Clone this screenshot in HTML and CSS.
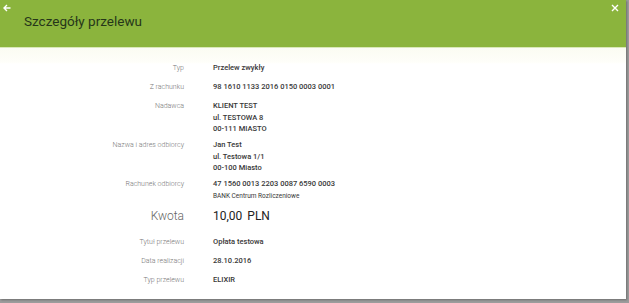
FILE: index.html
```html
<!DOCTYPE html>
<html lang="pl">
<head>
  <meta charset="UTF-8" />
  <title>Szczegóły przelewu</title>
  <link rel="stylesheet" href="styles.css">
</head>
<body>

  <div class="okno">
    <div class="naglowek">
      <!-- strzałka wstecz -->
      <button class="btn-wstecz" aria-label="Wstecz">
        <svg width="8" height="8" viewBox="0 0 8 8"><path d="M7.5 4H1.2M4 1L1 4l3 3" fill="none" stroke="#fff" stroke-width="1.4"/></svg>
      </button>
      <h1>Szczegóły przelewu</h1>
      <button class="btn-zamknij" aria-label="Zamknij">
        <svg width="8" height="8" viewBox="0 0 8 8"><path d="M1 1l6 6M7 1L1 7" fill="none" stroke="#fff" stroke-width="1.4"/></svg>
      </button>
    </div>

    <div class="tresc">
      <div class="wiersz">
        <div class="etykieta">Typ</div>
        <div class="wartosc">Przelew zwykły</div>
      </div>
      <div class="wiersz">
        <div class="etykieta">Z rachunku</div>
        <div class="wartosc">98 1610 1133 2016 0150 0003 0001</div>
      </div>
      <div class="wiersz">
        <div class="etykieta">Nadawca</div>
        <div class="wartosc">KLIENT TEST<br>ul. TESTOWA 8<br>00-111 MIASTO</div>
      </div>
      <div class="wiersz">
        <div class="etykieta">Nazwa i adres odbiorcy</div>
        <div class="wartosc">Jan Test<br>ul. Testowa 1/1<br>00-100 Miasto</div>
      </div>
      <div class="wiersz">
        <div class="etykieta">Rachunek odbiorcy</div>
        <div class="wartosc">47 1560 0013 2203 0087 6590 0003<br><span class="bank">BANK Centrum Rozliczeniowe</span></div>
      </div>
      <div class="wiersz kwota">
        <div class="etykieta">Kwota</div>
        <div class="wartosc">10,00 PLN</div>
      </div>
      <div class="wiersz">
        <div class="etykieta">Tytuł przelewu</div>
        <div class="wartosc">Opłata testowa</div>
      </div>
      <div class="wiersz">
        <div class="etykieta">Data realizacji</div>
        <div class="wartosc">28.10.2016</div>
      </div>
      <div class="wiersz">
        <div class="etykieta">Typ przelewu</div>
        <div class="wartosc">ELIXIR</div>
      </div>
    </div>
  </div>

</body>
</html>
```

FILE: styles.css
```css
html, body {
  margin: 0; padding: 0;
  height: 100%;
  overflow: hidden;
  font-family: 'Roboto', 'Liberation Sans', sans-serif;
  background: #9c9c9c;
}

.okno {
  width: 626px;
  height: 299px;
  background: #fff;
  box-shadow: 1px 1px 2px rgba(0, 0, 0, 0.3);
}

.naglowek {
  position: relative;
  height: 48px;
  background: #8bb43d;
  border-bottom: 1px solid #d9e8b8;
  padding-left: 24px;
  box-sizing: border-box;
}

.naglowek h1 {
  margin: 0;
  padding-top: 13px;
  font-size: 13.5px;
  line-height: 17px;
  font-weight: 400;
  color: #26361a;
}

.btn-wstecz,
.btn-zamknij {
  position: absolute;
  top: 3px;
  width: 10px;
  height: 10px;
  padding: 0;
  border: none;
  background: none;
  display: flex;
  align-items: center;
  justify-content: center;
}

.btn-wstecz { left: 2px; }
.btn-zamknij { right: 6px; }

.tresc {
  padding-top: 12px;
  background: linear-gradient(#fbfcf2 0, #fefef9 14px, #fff 16px);
}

.wiersz {
  display: grid;
  grid-template-columns: 184px 1fr;
  column-gap: 29px;
  padding: 2px 0 2.5px;
  min-height: 19px;
  box-sizing: border-box;
  align-items: baseline;
}

.etykieta {
  text-align: right;
  font-size: 7px;
  line-height: 11.5px;
  color: #777;
  font-weight: 300;
}

.wartosc {
  font-size: 7.5px;
  line-height: 11.5px;
  color: #383838;
  font-weight: 500;
}

.bank {
  font-size: 6.5px;
  font-weight: 400;
}

.kwota {
  padding: 4px 0 11.5px;
}

.kwota .etykieta {
  font-size: 12px;
  line-height: 14px;
  color: #666;
}

.kwota .wartosc {
  font-size: 12px;
  line-height: 14px;
  font-weight: 400;
  color: #222;
  word-spacing: 2px;
}
```
